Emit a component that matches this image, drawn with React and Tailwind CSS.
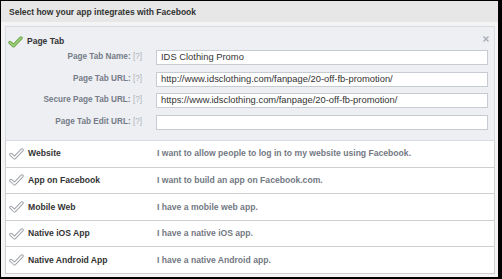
const fields = [
  { label: "Page Tab Name:", value: "IDS Clothing Promo" },
  { label: "Page Tab URL:", value: "http://www.idsclothing.com/fanpage/20-off-fb-promotion/" },
  { label: "Secure Page Tab URL:", value: "https://www.idsclothing.com/fanpage/20-off-fb-promotion/" },
  { label: "Page Tab Edit URL:", value: "" },
];

const options = [
  { title: "Website", desc: "I want to allow people to log in to my website using Facebook." },
  { title: "App on Facebook", desc: "I want to build an app on Facebook.com." },
  { title: "Mobile Web", desc: "I have a mobile web app." },
  { title: "Native iOS App", desc: "I have a native iOS app." },
  { title: "Native Android App", desc: "I have a native Android app." },
];

function Check({ active }) {
  const d = "M2 6.5 L5.5 9.8 L13 2";
  return (
    <svg width="15" height="12" viewBox="0 0 15 12">
      <path d={d} fill="none" stroke={active ? "#6ea64a" : "#9aa0a8"} strokeWidth="3.4" strokeLinecap="round" strokeLinejoin="round" />
      <path d={d} fill="none" stroke={active ? "#9fd27a" : "#ffffff"} strokeWidth="1.6" strokeLinecap="round" strokeLinejoin="round" />
    </svg>
  );
}

export default function App() {
  return (
    <div
      className="w-[502px] h-[279px] bg-black pl-px pt-px pr-[4px] pb-[2px]"
      style={{ fontFamily: "'Liberation Sans', Arial, sans-serif" }}
    >
      <div className="h-full bg-[#f4f4f4] flex flex-col">
        {/* Header */}
        <div className="h-[21px] shrink-0 bg-[#e7e7e7] flex items-center pl-[8px] pt-px text-[8.5px] font-bold text-[#333]">
          Select how your app integrates with Facebook
        </div>

        <div className="pl-[4px] pr-[3px] pt-[4px]">
          {/* Page Tab panel */}
          <div className="relative border border-[#d8dbe1] bg-[#edeff3] h-[115px] pt-[7px] pr-[6px]">
            <div className="flex items-center gap-[4px] h-[15px] pl-[2px]">
              <Check active />
              <span className="text-[8.5px] font-bold text-[#333]">Page Tab</span>
            </div>
            <svg className="absolute right-[4px] top-[8px]" width="8" height="8" viewBox="0 0 8 8">
              <path d="M1.5 1.5 L6.5 6.5 M6.5 1.5 L1.5 6.5" stroke="#a9aeb6" strokeWidth="1.4" />
            </svg>
            <div className="flex flex-col gap-[6.5px] mt-[1px]">
              {fields.map((f) => (
                <div key={f.label} className="flex items-center h-[15px]">
                  <div className="w-[150px] shrink-0 text-right text-[8.2px] font-bold text-[#757c87] pr-[14px] whitespace-nowrap">
                    {f.label} <span className="font-normal text-[#aeb2b9]">[?]</span>
                  </div>
                  <div className="flex-1 h-[15px] bg-white border border-[#c7cbd2] flex items-center px-[4px] text-[9.4px] text-[#333] whitespace-nowrap overflow-hidden">
                    {f.value}
                  </div>
                </div>
              ))}
            </div>
          </div>

          {/* Options */}
          <div className="flex flex-col border-x border-[#cfcfcf]">
            {options.map((o) => (
              <div key={o.title} className="h-[26.6px] bg-white border-b border-[#cfcfcf] flex items-center">
                <div className="w-[151px] shrink-0 flex items-center gap-[4px] pl-[3px]">
                  <Check />
                  <span className="text-[8.6px] font-bold text-[#333]">{o.title}</span>
                </div>
                <span className="text-[8.6px] font-bold text-[#737983] whitespace-nowrap">{o.desc}</span>
              </div>
            ))}
          </div>
        </div>
      </div>
    </div>
  );
}
